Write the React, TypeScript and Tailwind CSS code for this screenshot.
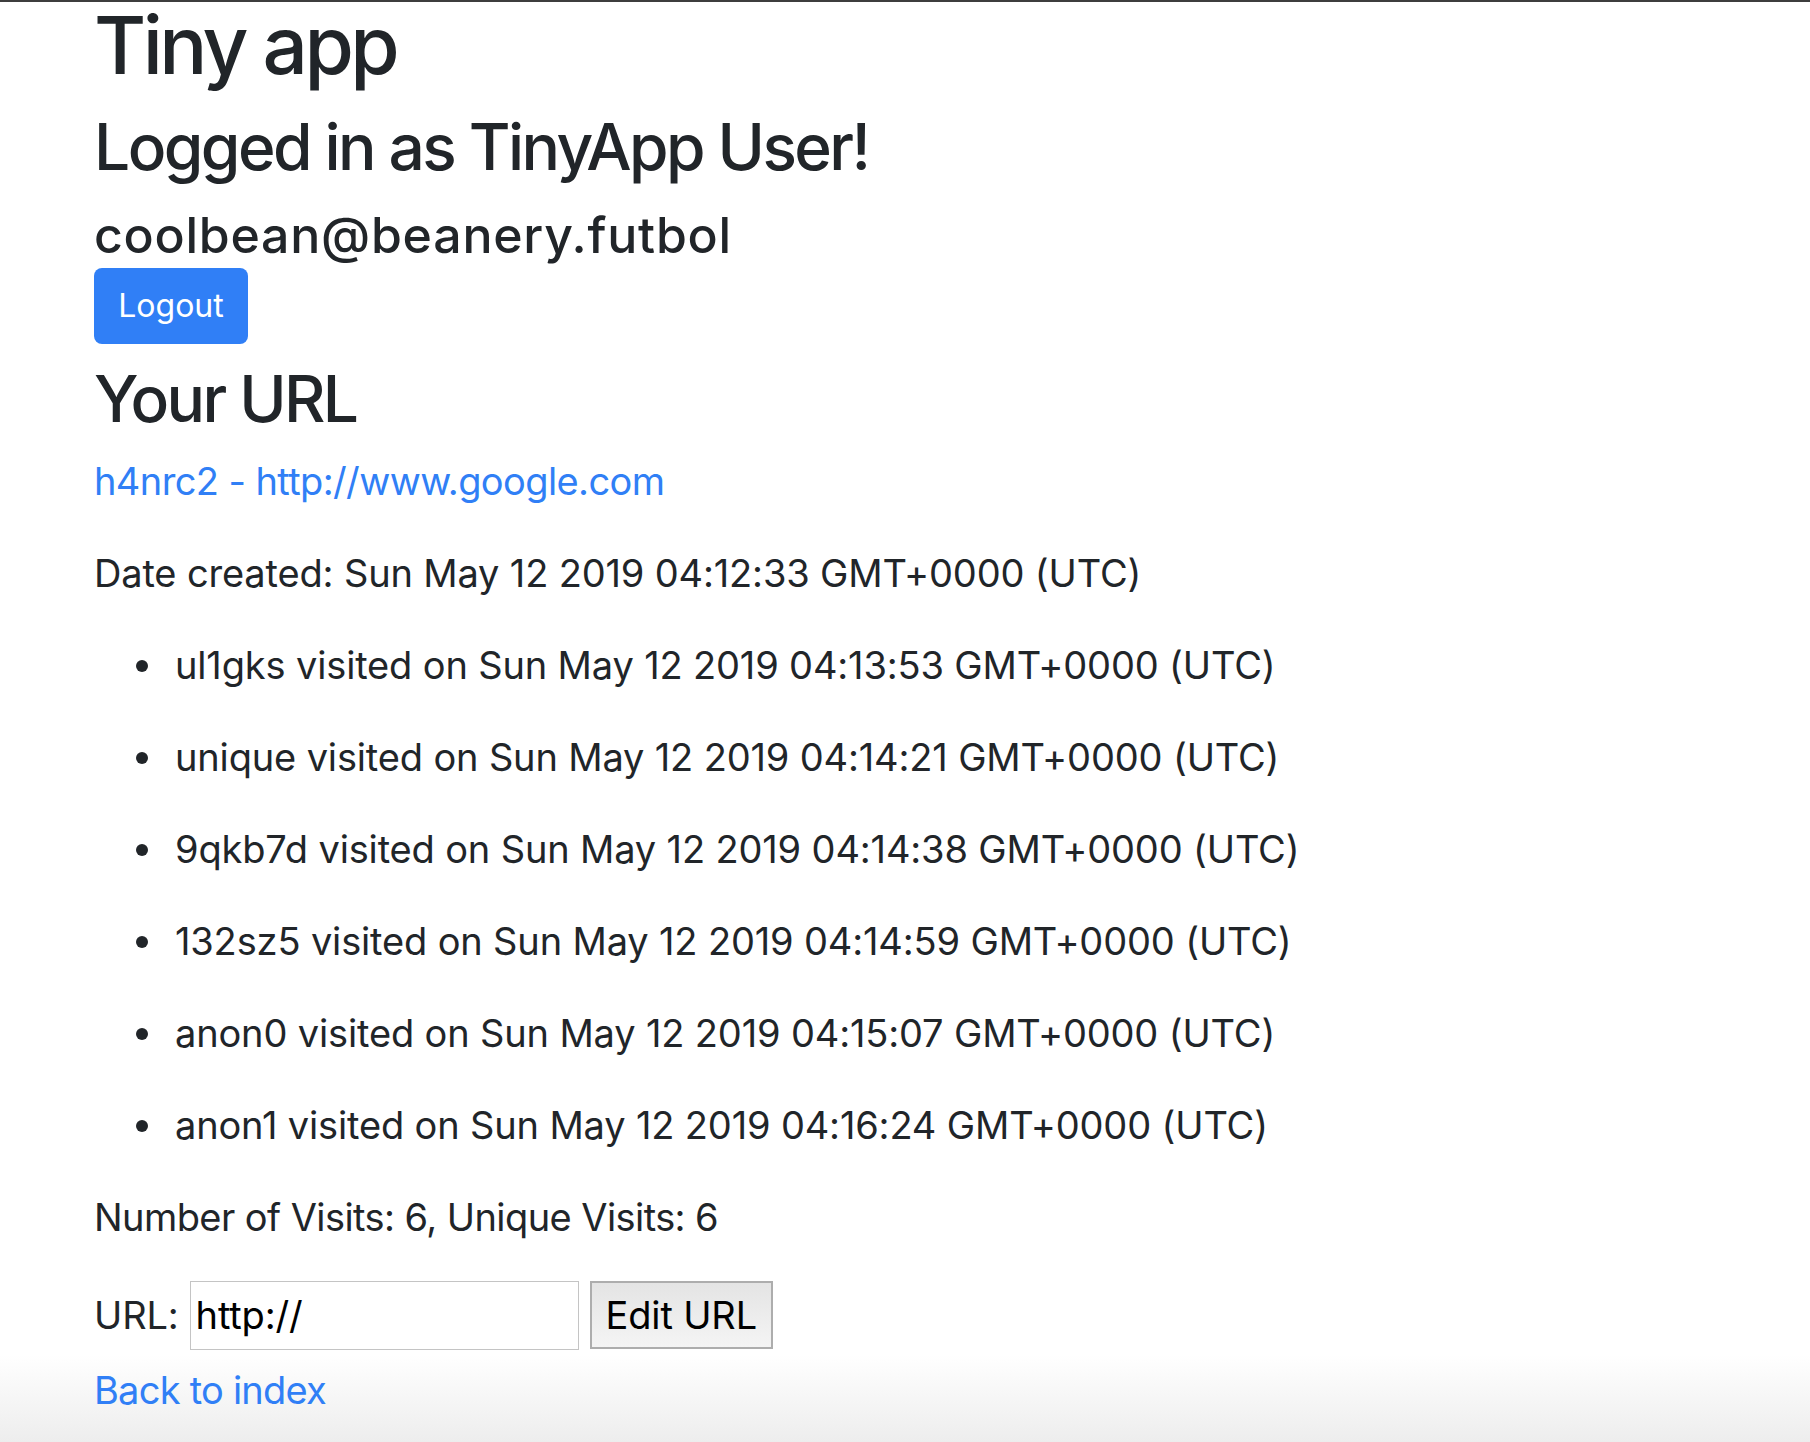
const visits = [
  { id: "ul1gks", time: "04:13:53" },
  { id: "unique", time: "04:14:21" },
  { id: "9qkb7d", time: "04:14:38" },
  { id: "132sz5", time: "04:14:59" },
  { id: "anon0", time: "04:15:07" },
  { id: "anon1", time: "04:16:24" },
];

export default function App() {
  return (
    <div className="min-h-[1442px] w-full bg-[linear-gradient(180deg,#ffffff_1355px,#ededed_1442px)] font-['Inter',sans-serif] text-[#212529]">
      {/* barra superior */}
      <div className="h-[2px] w-full bg-[#3d3d3d]" />

      <div className="pl-[94px]">
        <h1 className="text-[80px] leading-[86px] font-medium tracking-[-0.045em]">Tiny app</h1>
        <h2 className="mt-[20px] text-[64px] leading-[77px] font-medium tracking-[-0.04em]">
          Logged in as TinyApp User!
        </h2>
        <h4 className="mt-[20px] text-[50px] leading-[60px] font-medium tracking-[0.015em]">
          coolbean@beanery.futbol
        </h4>
        <button className="mt-[3px] flex h-[76px] w-[154px] items-center justify-center rounded-[8px] bg-[#307ff6] text-[32px] text-white">
          Logout
        </button>

        <h2 className="mt-[16px] text-[64px] leading-[77px] font-medium tracking-[-0.04em]">Your URL</h2>

        <div className="mt-[16px] text-[38px] leading-[57px] tracking-[-0.004em]">
          <p className="mb-[35px]">
            <a href="#" className="tracking-[-0.016em] text-[#307ff6]">h4nrc2 - http://www.google.com</a>
          </p>
          <p className="mb-[35px]">Date created: Sun May 12 2019 04:12:33 GMT+0000 (UTC)</p>
          <ul>
            {visits.map((v) => (
              <li key={v.id} className="mb-[35px] flex items-center">
                <span className="ml-[42px] mr-[27px] h-[12px] w-[12px] rounded-full bg-[#212529]" />
                <span>
                  {v.id} visited on Sun May 12 2019 {v.time} GMT+0000 (UTC)
                </span>
              </li>
            ))}
          </ul>
          <p className="tracking-[-0.015em]">Number of Visits: 6, Unique Visits: 6</p>

          <form className="mt-[34px] flex h-[70px] items-center" onSubmit={(e) => e.preventDefault()}>
            <label className="mr-[11px]">URL:</label>
            <input
              type="text"
              defaultValue="http://"
              className="h-[69px] w-[389px] border border-[#c4c4c4] bg-white pl-[5px] text-[38px] text-black outline-none"
            />
            <button
              type="submit"
              className="ml-[11px] h-[68px] border-2 border-[#adadad] bg-[linear-gradient(180deg,#e4e4e4,#f4f4f4)] px-[14px] text-[38px] text-black"
            >
              Edit URL
            </button>
          </form>

          <a href="#" className="mt-[12px] block tracking-[-0.02em] text-[#307ff6]">Back to index</a>
        </div>
      </div>
    </div>
  );
}
